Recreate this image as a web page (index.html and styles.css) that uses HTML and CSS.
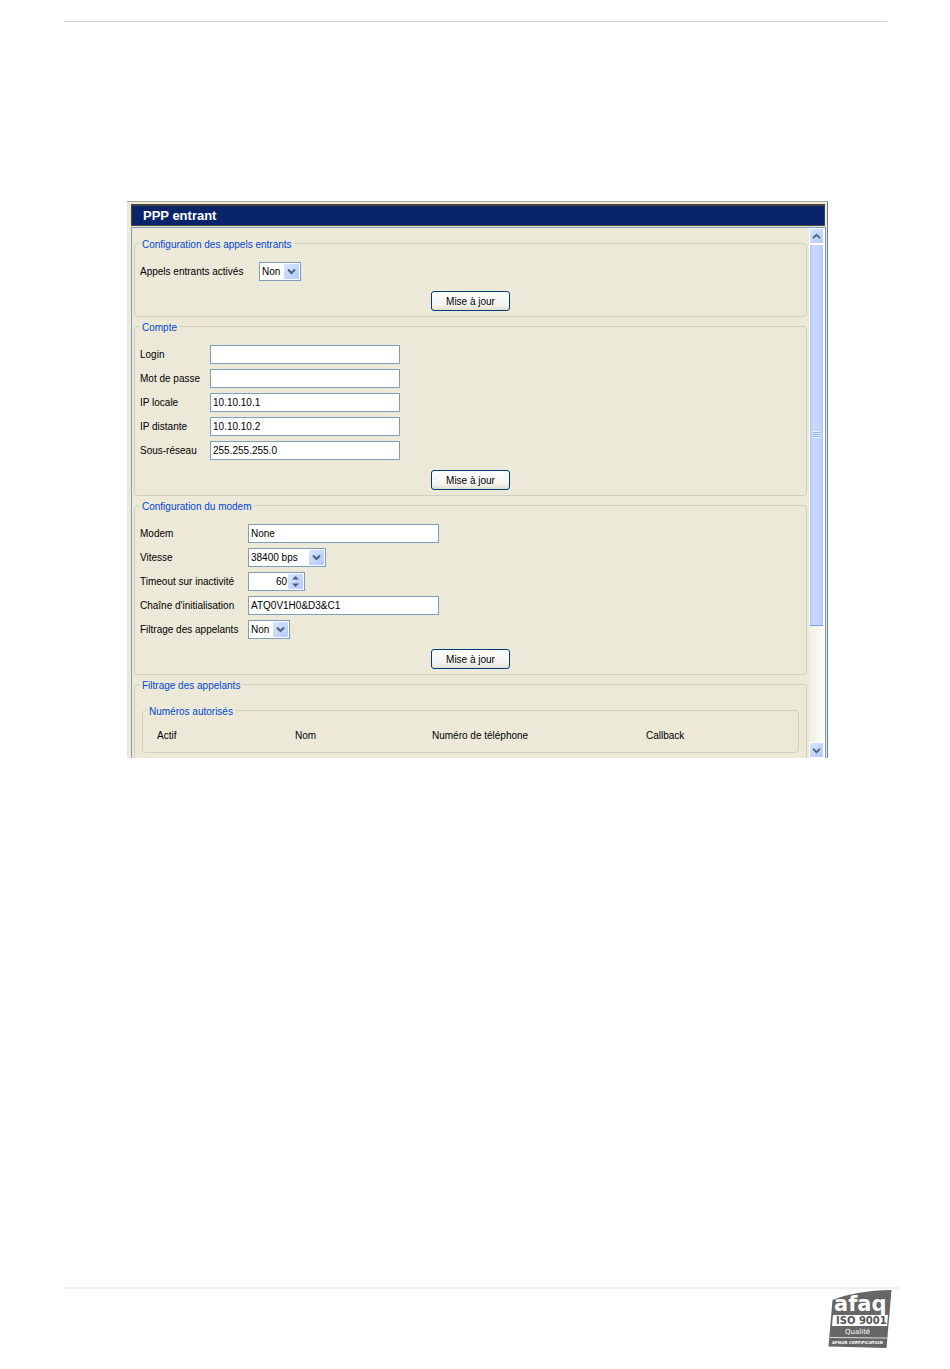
FILE: index.html
```
<!DOCTYPE html>
<html lang="fr">
<head>
    <meta charset="utf-8">
    <title>PPP entrant</title>
    <link rel="stylesheet" href="styles.css">
</head>
<body>
    <header class="page-header"></header>

    <main class="content">
        <div class="window">
            <h1 class="title">PPP entrant</h1>
            <div class="panel">
                <form class="form">
                    <fieldset class="group">
                        <legend>Configuration des appels entrants</legend>
                        <div class="fields fields-calls">
                            <label for="calls">Appels entrants activés</label>
                            <span class="combo combo-small">
                                <select id="calls"><option>Non</option><option>Oui</option></select>
                                <svg class="arrow" viewBox="0 0 15 15"><path d="M4 5.5l3.5 3.5L11 5.5"/></svg>
                            </span>
                        </div>
                        <button type="button" class="button">Mise à jour</button>
                    </fieldset>

                    <fieldset class="group">
                        <legend>Compte</legend>
                        <div class="fields fields-account">
                            <label for="login">Login</label>
                            <input type="text" id="login">
                            <label for="password">Mot de passe</label>
                            <input type="password" id="password">
                            <label for="local">IP locale</label>
                            <input type="text" id="local" value="10.10.10.1">
                            <label for="remote">IP distante</label>
                            <input type="text" id="remote" value="10.10.10.2">
                            <label for="subnet">Sous-réseau</label>
                            <input type="text" id="subnet" value="255.255.255.0">
                        </div>
                        <button type="button" class="button">Mise à jour</button>
                    </fieldset>

                    <fieldset class="group">
                        <legend>Configuration du modem</legend>
                        <div class="fields fields-modem">
                            <label for="modem">Modem</label>
                            <input type="text" id="modem" value="None">
                            <label for="speed">Vitesse</label>
                            <span class="combo combo-speed">
                                <select id="speed"><option>38400 bps</option></select>
                                <svg class="arrow" viewBox="0 0 15 15"><path d="M4 5.5l3.5 3.5L11 5.5"/></svg>
                            </span>
                            <label for="timeout">Timeout sur inactivité</label>
                            <span class="combo combo-spin">
                                <input type="number" id="timeout" value="60">
                                <svg class="arrow spin" viewBox="0 0 15 15"><path d="M4 5.5h7L7.5 2zM4 9.5h7L7.5 13z"/></svg>
                            </span>
                            <label for="init">Chaîne d'initialisation</label>
                            <input type="text" id="init" value="ATQ0V1H0&amp;D3&amp;C1">
                            <label for="filter">Filtrage des appelants</label>
                            <span class="combo combo-small">
                                <select id="filter"><option>Non</option><option>Oui</option></select>
                                <svg class="arrow" viewBox="0 0 15 15"><path d="M4 5.5l3.5 3.5L11 5.5"/></svg>
                            </span>
                        </div>
                        <button type="button" class="button">Mise à jour</button>
                    </fieldset>

                    <fieldset class="group group-open">
                        <legend>Filtrage des appelants</legend>
                        <fieldset class="group group-inner">
                            <legend>Numéros autorisés</legend>
                            <table class="numbers">
                                <thead>
                                    <tr>
                                        <th class="col-active">Actif</th>
                                        <th class="col-name">Nom</th>
                                        <th class="col-phone">Numéro de téléphone</th>
                                        <th>Callback</th>
                                    </tr>
                                </thead>
                            </table>
                        </fieldset>
                    </fieldset>
                </form>

                <div class="scrollbar">
                    <button type="button" class="scroll-button" aria-label="Haut">
                        <svg viewBox="0 0 15 15"><path d="M3.5 9.5l4-4 4 4"/></svg>
                    </button>
                    <div class="thumb">
                        <span class="grip"></span>
                    </div>
                    <div class="track"></div>
                    <button type="button" class="scroll-button" aria-label="Bas">
                        <svg viewBox="0 0 15 15"><path d="M3.5 5.5l4 4 4-4"/></svg>
                    </button>
                </div>
            </div>
        </div>
    </main>

    <footer class="page-footer">
        <svg class="logo" viewBox="0 0 64 60" role="img" aria-label="afaq ISO 9001">
            <path fill="#666" d="M4.500 11Q28 1.500 63.500 1L58.500 59L0.500 57.500z"/>
            <path fill="#fff" d="M5 26H60L59 37H4z"/>
            <path stroke="#ddd" d="M2 48.500L59 49"/>
            <text class="logo-name" x="6" y="22">afaq</text>
            <text class="logo-iso" x="8" y="35">ISO 9001</text>
            <text class="logo-quality" x="17" y="45">Qualité</text>
            <text class="logo-cert" x="4" y="55">AFNOR CERTIFICATION</text>
        </svg>
    </footer>
</body>
</html>
```
FILE: styles.css
```
* {
    box-sizing: border-box;
}
body {
    margin: 0;
    min-height: 100vh;
    display: flex;
    flex-direction: column;
    background-color: #fff;
    color: #000;
    font: 10px/13px "Liberation Sans", Arial, sans-serif;
}
.page-header {
    margin: 21px 63px 0 64px;
    border-top: 1px solid #d4d4d4;
}
.content {
    flex: 1;
    padding: 179px 122px 0 127px;
}
.window {
    padding: 2px 1px 0 4px;
    background-color: #ece9d8;
    border-top: 1px solid #aca899;
    border-right: 1px solid #5e7fae;
}
.title {
    margin: 0 1px 1px 0;
    padding: 2px 11px;
    background-color: #0a246a;
    border: 1px solid #48443c;
    border-top-width: 2px;
    color: #fff;
    font-size: 13px;
    line-height: 15px;
}
.panel {
    display: flex;
    border: 1px solid #7f9db9;
    border-bottom: none;
}
.form {
    flex: 1;
    display: flex;
    flex-direction: column;
    gap: 2px;
    padding: 8px 2px 0;
}
.group {
    min-width: 0;
    margin: 0;
    padding: 11px 5px 5px;
    border: 1px solid #d0d0bf;
    border-radius: 4px;
}
.group legend {
    padding: 3px 2px 0;
    color: #0046d5;
    line-height: 12px;
}
.group-open {
    padding: 11px 7px 5px;
    border-bottom: none;
    border-radius: 4px 4px 0 0;
}
.group-open > legend {
    margin-left: -2px;
}
.group-inner {
    padding: 11px 14px 10px;
}
.group-inner > legend {
    margin-left: -10px;
}
.fields {
    display: grid;
    grid-auto-rows: 19px;
    gap: 5px 0;
    align-items: center;
    white-space: nowrap;
}
.fields-calls {
    grid-template-columns: 119px 190px;
}
.fields-account {
    grid-template-columns: 70px 190px;
}
.fields-modem {
    grid-template-columns: 108px 191px;
}
input,
select {
    width: 100%;
    height: 19px;
    margin: 0;
    padding: 0 2px;
    appearance: none;
    background-color: #fff;
    border: 1px solid #7f9db9;
    border-radius: 0;
    color: #000;
    font: inherit;
}
.combo {
    display: grid;
    align-items: center;
}
.combo > * {
    grid-area: 1 / 1;
}
.combo-small {
    width: 42px;
}
.combo-speed {
    width: 78px;
}
.combo-spin {
    width: 57px;
}
.combo-spin input {
    padding-right: 17px;
    text-align: right;
    appearance: textfield;
}
.combo-spin input::-webkit-inner-spin-button {
    display: none;
}
.arrow {
    justify-self: end;
    width: 15px;
    height: 15px;
    margin-right: 2px;
    background: linear-gradient(135deg, #dae5ff, #b3c9fa);
    border-radius: 1px;
    fill: none;
    stroke: #4d6185;
    stroke-width: 2;
    pointer-events: none;
}
.spin {
    fill: #4d6185;
    stroke: none;
}
.button {
    display: block;
    width: 79px;
    height: 20px;
    margin: 10px auto 0;
    padding: 0;
    background: linear-gradient(#fff, #f4f3ee 70%, #e2dfd4);
    border: 1px solid #003c74;
    border-radius: 3px;
    color: #000;
    font: inherit;
}
.numbers {
    width: 100%;
    table-layout: fixed;
    border-collapse: collapse;
}
.numbers th {
    padding: 0;
    font-weight: normal;
    text-align: left;
}
.col-active {
    width: 138px;
}
.col-name {
    width: 137px;
}
.col-phone {
    width: 214px;
}
.scrollbar {
    width: 16px;
    display: flex;
    flex-direction: column;
    background: linear-gradient(90deg, #f0eee4, #fefefb);
}
.scroll-button {
    width: 15px;
    height: 16px;
    padding: 0;
    background: linear-gradient(135deg, #dae5ff, #b3c9fa);
    border: 1px solid #fff;
}
.scroll-button svg {
    display: block;
    fill: none;
    stroke: #4d6185;
    stroke-width: 2;
}
.thumb {
    flex: 382;
    width: 15px;
    display: flex;
    align-items: center;
    justify-content: center;
    background: linear-gradient(90deg, #b0c8fa, #c9d8fc 20%, #c6d5fc 70%, #b4cafa);
    border: 1px solid #fff;
    border-bottom-color: #7ba2e7;
}
.grip {
    width: 7px;
    height: 7px;
    background: repeating-linear-gradient(#eef4fe 0 1px, #8cb0f8 1px 2px);
}
.track {
    flex: 117;
}
.page-footer {
    display: flex;
    justify-content: flex-end;
    margin: 0 50px 20px 64px;
    padding: 0 8px 0 0;
    border-top: 2px solid #eee;
}
.logo {
    width: 64px;
    height: 60px;
}
.logo text {
    fill: #fff;
    font-family: "DejaVu Sans", sans-serif;
    font-weight: bold;
}
.logo .logo-name {
    font-size: 21px;
}
.logo .logo-iso {
    fill: #555;
    font-size: 10px;
}
.logo .logo-quality {
    font-size: 7px;
    font-weight: normal;
}
.logo .logo-cert {
    font-size: 4px;
}
```
